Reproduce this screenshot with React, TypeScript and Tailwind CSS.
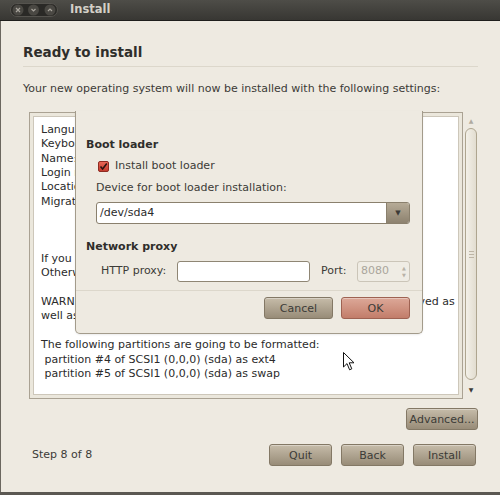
import React from "react";

const summaryLines = [
  "Language: English",
  "Keyboard layout: USA",
  "Name: ubuntu",
  "Login name: ubuntu",
  "Location: America/New_York",
  "Migration Assistant:",
  "",
  "",
  "",
  "If you continue, the changes listed below will be written to the disks.",
  "Otherwise, you will be able to make further changes manually.",
  "",
  "WARNING: This will destroy all data on any partitions you have removed as",
  "well as on the partitions that are going to be formatted.",
  "",
  "The following partitions are going to be formatted:",
  " partition #4 of SCSI1 (0,0,0) (sda) as ext4",
  " partition #5 of SCSI1 (0,0,0) (sda) as swap",
];

const Button = ({ label, width, ok }: { label: string; width: string; ok?: boolean }) => (
  <button
    className={`${width} h-[22px] rounded-[3px] border text-[11px] leading-none text-[#3c3b37] shadow-[inset_0_1px_0_rgba(255,255,255,0.35)] ${
      ok
        ? "border-[#9e6252] bg-gradient-to-b from-[#dca898] to-[#c27d6a]"
        : "border-[#837865] bg-gradient-to-b from-[#c6bca9] to-[#988c78]"
    }`}
  >
    {label}
  </button>
);

const WindowControls = () => (
  <svg width="48" height="14" viewBox="0 0 48 14" className="block">
    <rect x="0.5" y="0.5" width="47" height="13" rx="6.5" fill="#2a2926" stroke="#55534e" />
    <circle cx="8" cy="7" r="5.5" fill="#4a4843" />
    <circle cx="23.5" cy="7" r="5.5" fill="#4a4843" />
    <circle cx="40" cy="7" r="5.5" fill="#4a4843" />
    <path d="M6 5 L10 9 M10 5 L6 9" stroke="#a9a59d" strokeWidth="1.2" />
    <path d="M21.5 6 L23.5 8 L25.5 6" stroke="#a9a59d" strokeWidth="1.2" fill="none" />
    <path d="M38 8 L40 6 L42 8" stroke="#a9a59d" strokeWidth="1.2" fill="none" />
  </svg>
);

const Checkbox = () => (
  <svg width="11" height="11" viewBox="0 0 11 11" className="block">
    <defs>
      <linearGradient id="cb" x1="0" y1="0" x2="0" y2="1">
        <stop offset="0" stopColor="#ea6a58" />
        <stop offset="1" stopColor="#c23a2c" />
      </linearGradient>
    </defs>
    <rect x="0.5" y="0.5" width="10" height="10" rx="1.5" fill="url(#cb)" stroke="#8e2c22" />
    <path d="M2.5 5.5 L4.6 8 L8.8 2.5" stroke="#2a1410" strokeWidth="1.6" fill="none" />
  </svg>
);

const Cursor = () => (
  <svg width="12" height="19" viewBox="0 0 12 19" className="block">
    <path d="M0.5 0.5 L0.5 15 L4 11.6 L6.6 17.8 L8.8 16.8 L6.2 10.8 L11 10.8 Z" fill="#ffffff" stroke="#111111" strokeWidth="1" />
  </svg>
);

export default function App() {
  return (
    <div className="relative flex h-[495px] w-[500px] flex-col overflow-hidden bg-[#eeeae1] font-['DejaVu_Sans',sans-serif] text-[11px] text-[#3c3b37]">
      {/* title bar */}
      <div className="flex h-[21px] shrink-0 items-center border-b border-[#1f1e1c] bg-gradient-to-b from-[#4e4d48] to-[#383733] pl-[10px]">
        <WindowControls />
        <span className="ml-[12px] text-[11.5px] font-bold text-[#d4d0c7]">Install</span>
      </div>

      <div className="flex flex-1 flex-col border-l border-[#6b675f] px-[22px] pt-[23px]">
        <h1 className="text-[13.5px] font-bold leading-[16px] text-[#2f2e2b]">Ready to install</h1>
        <div className="mt-[6px] h-px bg-[#dcd7cb]" />
        <p className="mt-[15px] leading-[14px]">
          Your new operating system will now be installed with the following settings:
        </p>

        <div className="mt-[16px] flex h-[287px]">
          <div className="ml-[6px] flex w-[434px] border border-[#aaa293] bg-[#ebe7dc] p-[3px]">
            <div className="flex-1 overflow-hidden border border-[#cdc7ba] bg-white pl-[7px] pt-[6px]">
              {summaryLines.map((line, i) => (
                <div key={i} className="h-[14.35px] whitespace-pre leading-[14.35px] text-[#2b2b2b]">
                  {line}
                </div>
              ))}
            </div>
          </div>
          <div className="ml-[2px] flex w-[12px] flex-col items-center">
            <div className="flex h-[16px] items-center text-[6px] text-[#b0aa9f]">▲</div>
            <div className="flex h-[252px] w-[12px] items-center justify-center rounded-full border border-[#aea58f] bg-gradient-to-r from-[#f3f0e8] to-[#e2ddd0]">
              <div className="flex flex-col gap-[2px]">
                <div className="h-px w-[5px] bg-[#bdb5a5]" />
                <div className="h-px w-[5px] bg-[#bdb5a5]" />
                <div className="h-px w-[5px] bg-[#bdb5a5]" />
              </div>
            </div>
            <div className="flex flex-1 items-center text-[6px] text-[#3c3b37]">▼</div>
          </div>
        </div>

        <div className="mt-[9px] flex justify-end">
          <Button label="Advanced..." width="w-[72px]" />
        </div>

        <div className="mt-[14px] flex items-center pl-[9px] pr-[2px]">
          <span className="flex-1">Step 8 of 8</span>
          <div className="flex gap-[9px]">
            <Button label="Quit" width="w-[63px]" />
            <Button label="Back" width="w-[63px]" />
            <Button label="Install" width="w-[63px]" />
          </div>
        </div>
      </div>
      <div className="h-[3px] shrink-0 bg-[#5b5852]" />

      {/* boot loader dialog */}
      <div className="absolute left-[75px] top-[111px] flex w-[348px] flex-col rounded-b-[5px] border-x border-b border-[#a39b8b] bg-[#eeeae1] pb-[14px] pt-[27px] shadow-[0_1px_2px_rgba(0,0,0,0.08)]">
        <div className="pl-[10px] pr-[12px]">
          <div className="font-bold leading-[14px] text-[#2f2e2b]">Boot loader</div>
          <div className="ml-[12px] mt-[7px] flex h-[14px] items-center gap-[6px]">
            <Checkbox />
            <span>Install boot loader</span>
          </div>
          <div className="ml-[10px] mt-[8px] leading-[14px]">Device for boot loader installation:</div>
          <div className="ml-[10px] mt-[7px] flex h-[22px] overflow-hidden rounded-[3px] border border-[#8a806d] bg-white">
            <span className="flex flex-1 items-center pl-[3px] text-[#2b2b2b]">/dev/sda4</span>
            <span className="flex w-[23px] items-center justify-center border-l border-[#8a806d] bg-gradient-to-b from-[#b6ab97] to-[#8d826f] text-[7px] text-[#3c3b37]">
              ▼
            </span>
          </div>
          <div className="mt-[16px] font-bold leading-[14px] text-[#2f2e2b]">Network proxy</div>
          <div className="ml-[15px] mt-[7px] flex h-[21px] items-center">
            <span className="w-[76px]">HTTP proxy:</span>
            <div className="h-[21px] w-[133px] rounded-[3px] border border-[#8f8674] bg-white" />
            <span className="ml-[11px] w-[36px]">Port:</span>
            <div className="flex h-[21px] w-[53px] items-center rounded-[3px] border border-[#cbc5b8] bg-[#efece4] pl-[3px]">
              <span className="flex-1 text-[#aaa59b]">8080</span>
              <span className="flex w-[10px] flex-col items-center text-[5px] leading-[7px] text-[#b8b2a7]">
                <span>▲</span>
                <span>▼</span>
              </span>
            </div>
          </div>
        </div>
        <div className="mt-[8px] h-px bg-[#dcd7cb]" />
        <div className="mt-[6px] flex justify-end gap-[8px] pr-[12px]">
          <Button label="Cancel" width="w-[69px]" />
          <Button label="OK" width="w-[69px]" ok />
        </div>
      </div>

      <div className="absolute left-[343px] top-[352px]">
        <Cursor />
      </div>
    </div>
  );
}
